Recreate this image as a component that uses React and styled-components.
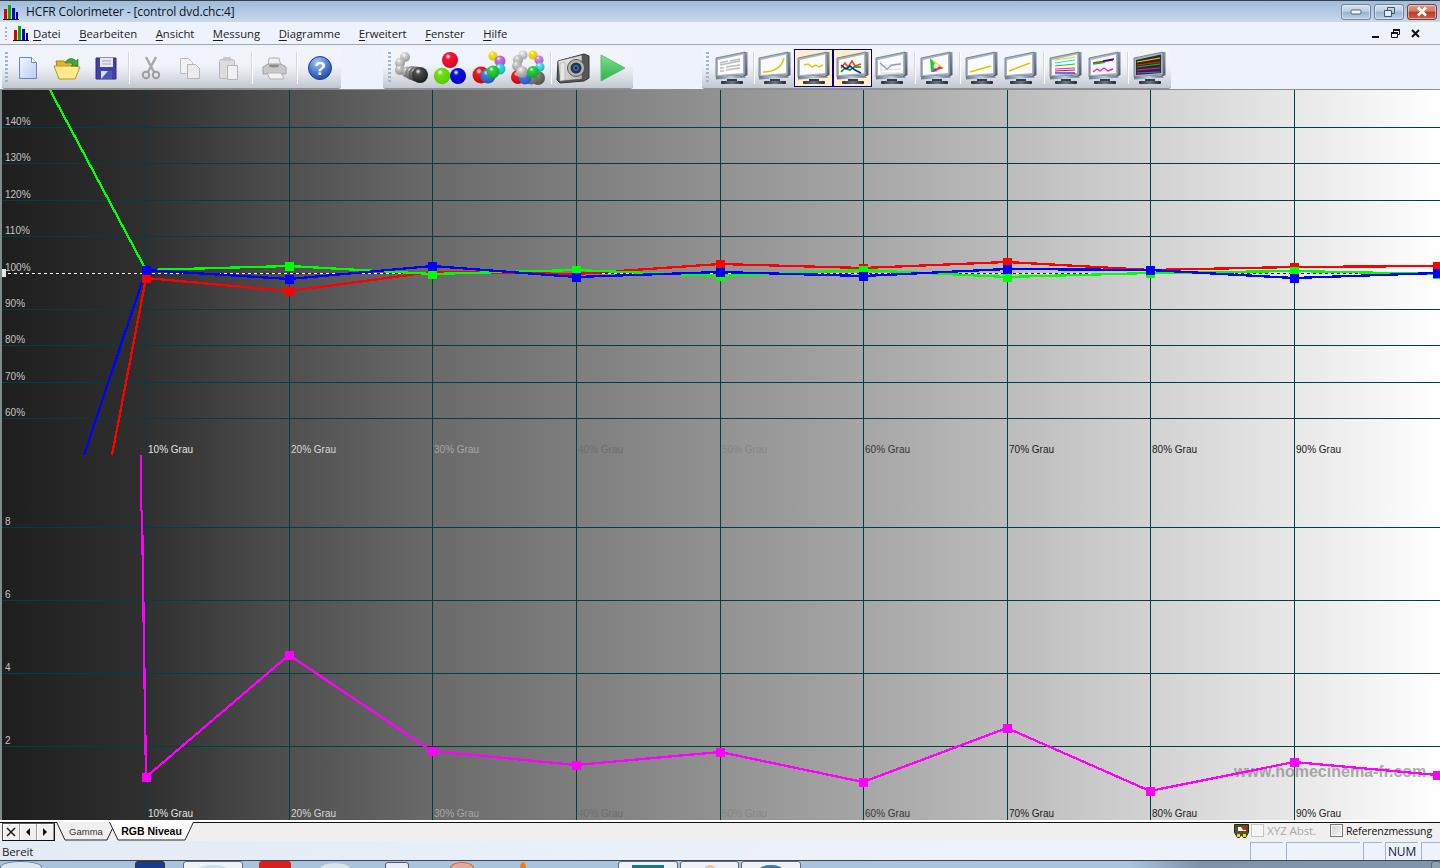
import React, { useId } from "react";
import styled, { createGlobalStyle } from "styled-components";

const uiFont = `"Open Sans", "Noto Sans", sans-serif`;
const chartFont = `"Liberation Sans", Arial, sans-serif`;
const gridColor = "#004040";

const GlobalStyle = createGlobalStyle`
  html, body { margin: 0; padding: 0; background: #eef3fb; overflow: hidden; }
  * { box-sizing: border-box; }
`;

const Window = styled.div`
  display: flex;
  flex-direction: column;
  width: 1440px;
  height: 868px;
  overflow: hidden;
  font-family: ${uiFont};
  color: #111;
`;

const TitleBar = styled.div`
  display: flex;
  align-items: center;
  flex: none;
  height: 22px;
  padding: 0 3px;
  border-top: 1px solid #3a3f46;
  background: linear-gradient(#9fbcdc, #c7d8eb);
`;
const TitleText = styled.div`
  flex: 1;
  margin-left: 7px;
  font-size: 12px;
  color: #10141c;
  letter-spacing: -0.13px;
`;
const WindowButtons = styled.div`
  display: flex;
  gap: 3px;
`;
const WindowButton = styled.div`
  display: flex;
  align-items: center;
  justify-content: center;
  width: 30px;
  height: 16px;
  border: 1px solid ${({ $close }) => ($close ? "#7c3a38" : "#6f8199")};
  border-radius: 3px;
  box-shadow: inset 0 0 0 1px rgba(255, 255, 255, 0.45);
  background: ${({ $close }) =>
    $close
      ? "linear-gradient(#dd9a88 0, #d07a66 45%, #b93a26 50%, #c9604c 100%)"
      : "linear-gradient(#d4e1ef 0, #bccee2 45%, #9ab4d0 50%, #b9cde2 100%)"};
`;

const MenuBar = styled.div`
  display: flex;
  align-items: center;
  flex: none;
  height: 23px;
  padding-left: 5px;
  background: #eef3fb;
  border-bottom: 1px solid #a3a6aa;
`;
const MenuGrip = styled.div`
  width: 2px;
  height: 13px;
  margin-right: 6px;
  background: repeating-linear-gradient(#9db0c8 0 2px, transparent 2px 4px);
`;
const MenuList = styled.div`
  display: flex;
  gap: 18.5px;
  flex: 1;
  margin-left: 4px;
`;
const MenuItem = styled.div`
  font-size: 11.3px;
  color: #1a1a1a;
  & u { text-underline-offset: 2px; }
`;
const ChildControls = styled.div`
  display: flex;
  gap: 9px;
  margin-right: 19px;
  align-items: center;
`;

const ToolStrip = styled.div`
  display: flex;
  flex: none;
  height: 45px;
  padding-top: 3px;
  background: #eef3fb;
  border-bottom: 1px solid #8a8d92;
`;
const ToolGroup = styled.div`
  display: flex;
  align-items: center;
  width: ${({ $width }) => $width}px;
  margin-left: ${({ $left }) => $left}px;
  padding-left: ${({ $pad }) => $pad}px;
  border-radius: 3px;
  border-bottom: 1px solid #8e9196;
  background: linear-gradient(#f2f5fb 0, #eff2f8 45%, #e2e5ec 65%, #c3c7cf 100%);
`;
const ToolGrip = styled.div`
  flex: none;
  width: 3px;
  height: 32px;
  margin-right: ${({ $right }) => $right || 0}px;
  background: repeating-linear-gradient(#9db4d4 0 2px, transparent 2px 4px);
`;
const ToolSlot = styled.div`
  display: flex;
  align-items: center;
  justify-content: center;
  flex: none;
  width: 39px;
  height: 38px;
  border: 1px solid ${({ $active }) => ($active ? "#000080" : "transparent")};
  background: ${({ $active }) => ($active ? "#ffeecb" : "transparent")};
`;
const ToolSep = styled.div`
  flex: none;
  width: ${({ $w }) => $w}px;
  height: 32px;
  display: flex;
  justify-content: center;
  &::before {
    content: "";
    width: 1px;
    background: #d2d6dd;
    box-shadow: 1px 0 #fff;
  }
`;

const ChartArea = styled.div`
  flex: none;
  height: 730px;
  border-left: 2px solid #7e8c8c;
  background: linear-gradient(
    90deg,
    #1e1e1e 0,
    #303030 146px,
    #505050 289px,
    #6a6a6a 432px,
    #7e7e7e 576px,
    #929292 720px,
    #a6a6a6 863px,
    #bcbcbc 1007px,
    #d2d2d2 1150px,
    #e8e8e8 1294px,
    #ffffff 1440px
  );
`;
const ChartSvg = styled.svg`
  display: block;
  width: 1440px;
  height: 365px;
  margin-left: -2px;
`;
const AxisText = styled.text`
  font-family: ${chartFont};
  font-size: 10px;
  fill: ${({ $fill }) => $fill};
`;
const Watermark = styled.text`
  font-family: ${chartFont};
  font-size: 16px;
  font-weight: 700;
  fill: #8f8f8f;
  opacity: 0.75;
`;

const TabRow = styled.div`
  display: flex;
  align-items: stretch;
  flex: none;
  height: 21px;
  border-top: 2px solid #fff;
  background: #f0f0f0;
  box-shadow: inset 0 1px #111;
  padding: 0 8px 0 2px;
`;
const TabNav = styled.div`
  display: flex;
  height: 18px;
  margin-top: 1px;
  border: 1px solid #555;
  border-right-color: #111;
  border-bottom-color: #111;
`;
const TabNavButton = styled.div`
  display: flex;
  align-items: center;
  justify-content: center;
  width: 17px;
  background: #f0f0f0;
  border-right: 1px solid #9a9a9a;
  box-shadow: inset 1px 1px #fff;
`;
const TabList = styled.div`
  display: flex;
  flex: 1;
  margin-left: 1px;
`;
const Tab = styled.div`
  position: relative;
  display: flex;
  align-items: center;
  justify-content: center;
  width: ${({ $w }) => $w}px;
  margin-left: ${({ $left }) => $left || 0}px;
  font-family: ${chartFont};
  font-size: ${({ $active }) => ($active ? 10.5 : 9.5)}px;
  font-weight: ${({ $active }) => ($active ? 700 : 400)};
  color: ${({ $active }) => ($active ? "#000" : "#333")};
  & svg { position: absolute; inset: 0; }
  & span { position: relative; margin-top: -1px; }
`;
const RefOptions = styled.div`
  display: flex;
  align-items: center;
  padding-bottom: 2px;
  letter-spacing: -0.1px;
`;
const CheckBox = styled.div`
  width: 13px;
  height: 13px;
  margin-right: 3px;
  border: 1px solid ${({ $off }) => ($off ? "#c4c4c4" : "#777")};
  background: ${({ $off }) => ($off ? "#f4f4f4" : "linear-gradient(135deg, #d2d2d2, #f4f4f4)")};
  box-shadow: inset 0 0 0 1px #f8f8f8;
`;
const CheckLabel = styled.span`
  color: ${({ $off }) => ($off ? "#a8a8a8" : "#111")};
  font-size: ${({ $off }) => ($off ? 11.5 : 10.5)}px;
  margin-right: ${({ $right }) => $right}px;
`;

const StatusBar = styled.div`
  display: flex;
  align-items: center;
  flex: none;
  height: 19px;
  padding-left: 2px;
  font-size: 11.5px;
  letter-spacing: -0.15px;
  background: linear-gradient(90deg, #e5ebf5 0, #e9eff8 500px, #eef3fb 1000px);
`;
const StatusText = styled.div`
  flex: 1;
  padding-top: 1px;
  color: #222;
`;
const StatusPane = styled.div`
  display: flex;
  align-items: center;
  justify-content: center;
  width: ${({ $w }) => $w}px;
  height: 18px;
  margin-top: 1px;
  margin-left: 3px;
  border-left: 1px solid #9db4d0;
  border-top: 1px solid #9db4d0;
  font-size: 12px;
  color: #14143c;
`;

const Taskbar = styled.div`
  display: flex;
  flex: 1;
  overflow: hidden;
  border-top: 1px solid #3e4650;
  background: linear-gradient(90deg, #a9c3dd 0, #a9c3dd 1130px, #7f92a9 1200px, #8095ac 1430px);
`;
const TaskItem = styled.div`
  display: flex;
  justify-content: center;
  flex: none;
  width: ${({ $w }) => $w}px;
  height: 12px;
  margin-top: ${({ $top }) => $top || 0}px;
  margin-left: ${({ $left }) => $left}px;
  border-radius: ${({ $round }) => ($round ? "50% 50% 0 0" : "3px 3px 0 0")};
  background: ${({ $bg }) => $bg};
  border: ${({ $line }) => ($line ? `1px solid ${$line}` : "none")};
`;
const TaskGlyph = styled.div`
  width: ${({ $w }) => $w}px;
  height: 10px;
  margin-top: 3px;
  border-radius: ${({ $round }) => ($round ? "50% 50% 0 0" : "0")};
  background: ${({ $bg }) => $bg};
`;

const AppIcon = () => (
  <svg width="16" height="16" viewBox="0 0 16 16">
    <rect x="1" y="5" width="3" height="10" fill="#e00000" />
    <rect x="5" y="1" width="3" height="14" fill="#00b000" />
    <rect x="9" y="4" width="3" height="11" fill="#0000e0" />
    <rect x="13" y="8" width="2" height="7" fill="#0000a0" />
    <rect x="0" y="15" width="16" height="1" fill="#111" />
  </svg>
);

const Ball = ({ x, y, r, c, mid }) => {
  const id = useId();
  return (
    <>
      <defs>
        <radialGradient id={id} cx="0.38" cy="0.28" r="0.8">
          <stop offset="0" stopColor="#ffffff" />
          <stop offset="0.22" stopColor={mid || c} />
          <stop offset="1" stopColor={c} />
        </radialGradient>
      </defs>
      <circle cx={x} cy={y} r={r} fill={`url(#${id})`} />
    </>
  );
};

const Icon = ({ children, w = 36, h = 36 }) => (
  <svg width={w} height={h} viewBox={`0 0 ${w} ${h}`}>
    {children}
  </svg>
);

const NewIcon = () => (
  <Icon w={24} h={26}>
    <defs>
      <linearGradient id="docFill" x1="0" y1="0" x2="1" y2="1">
        <stop offset="0" stopColor="#f2f6ff" />
        <stop offset="1" stopColor="#bccdf0" />
      </linearGradient>
    </defs>
    <path d="M3.5 2.5h12l5 5v16h-17z" fill="url(#docFill)" stroke="#6f86bd" />
    <path d="M15.5 2.5v5h5" fill="#fff" stroke="#6f86bd" />
  </Icon>
);
const OpenIcon = () => (
  <Icon w={28} h={26}>
    <path d="M3 6h8l2 2h9v15H6z" fill="#e2b52c" stroke="#a88318" />
    <path d="M1 11h20l6 1-5 12H6z" fill="#ffe98a" stroke="#b8962a" />
    <path d="M12 8c2-5 8-6 11-2l2-2v7h-7l2-2c-2-2-5-2-8-1z" fill="#3ea83e" stroke="#1d701d" strokeWidth="0.6" />
  </Icon>
);
const SaveIcon = () => (
  <Icon w={24} h={26}>
    <path d="M2 3h20v21H2z" fill="#4040a8" stroke="#2c2c80" />
    <rect x="6" y="3" width="13" height="9" fill="#e8e8f0" />
    <path d="M8 6h9M8 9h9" stroke="#a0a0b8" />
    <rect x="7" y="16" width="11" height="8" fill="#d8e0f0" />
    <path d="M7 24l7-8h4v8z" fill="#4a5ab0" />
  </Icon>
);
const CutIcon = () => (
  <Icon w={20} h={26}>
    <path d="M5 2l8 15M15 2L7 17" stroke="#a8a8a8" strokeWidth="2.4" />
    <circle cx="5" cy="20" r="3.2" fill="none" stroke="#9c9c9c" strokeWidth="2" />
    <circle cx="15" cy="20" r="3.2" fill="none" stroke="#9c9c9c" strokeWidth="2" />
  </Icon>
);
const CopyIcon = () => (
  <Icon w={24} h={26}>
    <path d="M2.5 3.5h8l4 4v11h-12z" fill="#f2f2f2" stroke="#bdbdbd" />
    <path d="M9.5 9.5h8l4 4v10h-12z" fill="#ececec" stroke="#b5b5b5" />
  </Icon>
);
const PasteIcon = () => (
  <Icon w={24} h={26}>
    <rect x="2.5" y="4.5" width="15" height="19" rx="2" fill="#dcdcdc" stroke="#b5b5b5" />
    <rect x="6" y="2" width="8" height="4" rx="1" fill="#c6c6c6" />
    <path d="M10.5 10.5h10v14h-10z" fill="#f0f0f0" stroke="#b5b5b5" />
  </Icon>
);
const PrintIcon = () => (
  <Icon w={26} h={26}>
    <path d="M8 3h10l2 8H7z" fill="#f0f0f0" stroke="#b2b2b2" />
    <path d="M2 12l5-3h13l5 3v7H2z" fill="#c8c8c8" stroke="#a2a2a2" />
    <path d="M6 18h14l3 6H9z" fill="#f2f2f2" stroke="#b2b2b2" />
    <ellipse cx="13" cy="11" rx="5" ry="1.4" fill="#8c8c8c" />
  </Icon>
);
const HelpIcon = () => (
  <Icon w={26} h={26}>
    <defs>
      <radialGradient id="helpFill" cx="0.4" cy="0.25" r="0.85">
        <stop offset="0" stopColor="#a8c8f4" />
        <stop offset="0.6" stopColor="#3f6fcc" />
        <stop offset="1" stopColor="#1a3f9c" />
      </radialGradient>
    </defs>
    <circle cx="13" cy="13" r="11.5" fill="url(#helpFill)" stroke="#24408c" />
    <text x="13" y="20" textAnchor="middle" fontFamily={chartFont} fontSize="19" fontWeight="700" fill="#fff">
      ?
    </text>
  </Icon>
);

const ChainIcon = () => (
  <Icon>
    <Ball x={12} y={7} r={5} c="#8e8e8e" mid="#d8d8d8" />
    <Ball x={7} y={13} r={5} c="#8e8e8e" mid="#d0d0d0" />
    <Ball x={7} y={20} r={5} c="#808080" mid="#c8c8c8" />
    <Ball x={14} y={22} r={5.5} c="#6a6a6a" mid="#bcbcbc" />
    <Ball x={19} y={23} r={7} c="#4a4a4a" mid="#9c9c9c" />
    <Ball x={23} y={24} r={7.5} c="#333" mid="#787878" />
    <Ball x={27} y={25} r={8} c="#161616" mid="#4c4c4c" />
  </Icon>
);
const RgbIcon = () => (
  <Icon>
    <Ball x={18} y={10} r={8} c="#d80020" mid="#f01838" />
    <Ball x={10} y={26} r={8.2} c="#50c800" mid="#70e010" />
    <Ball x={26} y={26} r={8} c="#0000c0" mid="#1010e0" />
  </Icon>
);
const ColorChainIcon = () => (
  <Icon>
    <Ball x={22} y={6} r={4.6} c="#d8c000" mid="#f4e020" />
    <Ball x={29} y={11} r={5.5} c="#a040c0" mid="#c878d8" />
    <Ball x={29} y={19} r={5.5} c="#10b0c0" mid="#40d8e0" />
    <Ball x={10} y={25} r={8.5} c="#c00000" mid="#e82020" />
    <Ball x={17} y={26} r={7.5} c="#2050c0" mid="#4080e0" />
    <Ball x={22} y={22} r={6.5} c="#10a020" mid="#30d040" />
  </Icon>
);
const AllColorsIcon = () => (
  <Icon>
    <Ball x={13} y={5} r={4.6} c="#a0a0a0" mid="#e0e0e0" />
    <Ball x={23} y={5} r={4.6} c="#d8c000" mid="#f4e020" />
    <Ball x={29} y={10} r={4.6} c="#b050c8" mid="#d088e0" />
    <Ball x={30} y={17} r={4.6} c="#10b0c0" mid="#50e0e8" />
    <Ball x={8} y={10} r={5} c="#909090" mid="#cccccc" />
    <Ball x={7} y={16} r={5} c="#909090" mid="#c8c8c8" />
    <Ball x={8} y={27} r={7} c="#c00000" mid="#e82020" />
    <Ball x={28} y={28} r={7} c="#484848" mid="#808080" />
    <Ball x={21} y={28} r={6.5} c="#606060" mid="#909090" />
    <Ball x={15} y={28} r={6.5} c="#2050c0" mid="#4080e0" />
    <Ball x={12} y={22} r={6} c="#888" mid="#d0d0d0" />
    <Ball x={23} y={22} r={6} c="#10a020" mid="#30d040" />
  </Icon>
);
const CameraIcon = () => (
  <Icon>
    <defs>
      <linearGradient id="camBody" x1="0" y1="0" x2="1" y2="1">
        <stop offset="0" stopColor="#f6f6f0" />
        <stop offset="1" stopColor="#b4b4b0" />
      </linearGradient>
    </defs>
    <path d="M3 11l26-7 5 2v22l-5 3-24 2-3-3z" fill="#55565a" stroke="#333" />
    <path d="M3 11l24-6v24l-22 2z" fill="url(#camBody)" stroke="#555" strokeWidth="0.6" />
    <path d="M5 13l5-1v18l-5 1z" fill="#e6e6de" stroke="#999" strokeWidth="0.5" />
    <circle cx="21" cy="18" r="8.5" fill="#b4b4b4" stroke="#555" />
    <circle cx="21" cy="18" r="5.5" fill="#333" />
    <circle cx="21" cy="18" r="3" fill="#2a66c8" />
    <circle cx="21" cy="18" r="1.2" fill="#10204a" />
  </Icon>
);
const PlayIcon = () => (
  <Icon w={28} h={30}>
    <defs>
      <linearGradient id="playFill" x1="0" y1="0" x2="0" y2="1">
        <stop offset="0" stopColor="#7ee08a" />
        <stop offset="1" stopColor="#2fb04c" />
      </linearGradient>
    </defs>
    <path d="M3 2l24 13L3 28z" fill="url(#playFill)" stroke="#58c070" />
  </Icon>
);

const Monitor = ({ children, dark }) => (
  <svg width="34" height="34" viewBox="0 0 34 34">
    <defs>
      <linearGradient id="monSide" x1="0" y1="0" x2="0" y2="1">
        <stop offset="0" stopColor="#8c97a8" />
        <stop offset="1" stopColor="#4c5868" />
      </linearGradient>
      <linearGradient id="monFoot" x1="0" y1="0" x2="1" y2="0">
        <stop offset="0" stopColor="#2c2f36" />
        <stop offset="0.5" stopColor="#6d7888" />
        <stop offset="1" stopColor="#22252a" />
      </linearGradient>
      <linearGradient id="monChin" x1="0" y1="0" x2="1" y2="0">
        <stop offset="0" stopColor="#67778d" />
        <stop offset="0.5" stopColor="#b9cbe0" />
        <stop offset="1" stopColor="#5a6a80" />
      </linearGradient>
    </defs>
    <path d="M29 1h3.5v23l-4 2z" fill="url(#monSide)" />
    <path d="M1 7L30 1v23L1 26z" fill="#aab3c0" stroke="#6b7484" strokeWidth="0.8" />
    <path d="M3 9l25-5.5V22L3 24z" fill={dark ? "#2a2a2a" : "#fbfbfb"} />
    <path d="M1 25h28l2 1.5L1 28.5z" fill="url(#monChin)" />
    <rect x="12" y="28" width="10" height="2" fill="#3a3f48" />
    <rect x="6" y="30" width="22" height="3" rx="1" fill="url(#monFoot)" />
    {children}
  </svg>
);

const monitors = [
  <path d="M5 12l8-2 M15 10l10-2 M5 14l20-4 M5 17h4M11 16l14-2M5 20h4M11 19l14-2" stroke="#bcbcbc" strokeWidth="1.4" />,
  <path d="M5 21c8 0 18-2 21-14" fill="none" stroke="#d8c800" strokeWidth="1.4" />,
  <path d="M7 14l4-1 4 3 4-2 3 2 4-2" fill="none" stroke="#d8c800" strokeWidth="1.4" />,
  <>
    <path d="M5 17l4-5 3 4 4-6 3 5 6-2" fill="none" stroke="#e05010" strokeWidth="1.6" />
    <path d="M5 21l4-4 5 2 4-3 7 0" fill="none" stroke="#108c10" strokeWidth="1.6" />
    <path d="M5 14l5 4 4-3 5 4 6 3" fill="none" stroke="#0030a0" strokeWidth="1.6" />
  </>,
  <>
    <path d="M6 10v12M6 22h20M6 19l20-1M6 15l20-2" stroke="#d0d8d0" strokeWidth="0.8" />
    <path d="M5 12l7 6 5-4 9-1" fill="none" stroke="#9d92d8" strokeWidth="1.4" />
  </>,
  <>
    <path d="M10 7l7 8-6 6z" fill="#18c830" />
    <path d="M10 7l14 10-7-2z" fill="#d8d020" />
    <path d="M24 17l-13 4 6-6z" fill="#e82838" />
    <path d="M11 21l3-2 5 1z" fill="#3848e0" />
    <circle cx="16" cy="15" r="2.5" fill="#fff" opacity="0.8" />
  </>,
  <path d="M5 21l21-6" fill="none" stroke="#d8c800" strokeWidth="1.4" />,
  <path d="M5 20l21-8" fill="none" stroke="#d8c800" strokeWidth="1.4" />,
  <>
    <path d="M6 9l20-3" stroke="#e8d800" strokeWidth="1.2" />
    <path d="M6 12l20-3" stroke="#20e0e0" strokeWidth="1.2" />
    <path d="M6 15l20-2" stroke="#10d010" strokeWidth="1.2" />
    <path d="M6 18l20-1" stroke="#f020e0" strokeWidth="1.2" />
    <path d="M6 20l20-1" stroke="#e01010" strokeWidth="1.2" />
    <path d="M6 22h20" stroke="#1010e0" strokeWidth="1.2" />
  </>,
  <>
    <path d="M5 12l20-3" stroke="#e01010" strokeWidth="1.6" />
    <path d="M5 13l8-1 4-1" stroke="#10c010" strokeWidth="1.4" />
    <path d="M15 10l11-2" stroke="#1010e0" strokeWidth="1.4" />
    <path d="M5 21l4-3 3 2 4-3 4 3 5-2" fill="none" stroke="#f010f0" strokeWidth="1.4" />
  </>,
  <>
    <path d="M4 11l23-4" stroke="#e8d800" strokeWidth="1.1" />
    <path d="M4 14l23-3" stroke="#e02010" strokeWidth="1.1" />
    <path d="M4 16l23-3" stroke="#10c010" strokeWidth="1.1" />
    <path d="M4 19l23-2" stroke="#f010f0" strokeWidth="1.1" />
    <path d="M4 22l23-1" stroke="#6060e0" strokeWidth="1.1" />
  </>
];

const menuItems = [
  ["D", "atei"],
  ["B", "earbeiten"],
  ["A", "nsicht"],
  ["M", "essung"],
  ["D", "iagramme"],
  ["E", "rweitert"],
  ["F", "enster"],
  ["H", "ilfe"]
];

const gridX = [146, 289, 432, 576, 720, 863, 1007, 1150, 1294];
const measureX = [...gridX, 1437];

const labelColors = ["#e2e2e2", "#d6d6d6", "#a6a6a6", "#6e6e6e", "#868686", "#383838", "#222", "#222", "#222"];

const redLine = [278, 291, 272, 274, 264, 268, 262, 270, 267, 266];
const greenLine = [270, 266, 274, 270, 276, 270, 277, 273, 271, 274];
const blueLine = [270, 279, 266, 277, 272, 276, 269, 270, 278, 273];
const pinkLine = [777, 655, 751, 765, 752, 782, 728, 791, 762, 775];

const toPoints = (ys, lead = []) =>
  [...lead, ...ys.map((y, i) => [measureX[i], y])].map((p) => p.join(",")).join(" ");

const Series = ({ ys, lead, color }) => (
  <polyline points={toPoints(ys, lead)} fill="none" stroke={color} strokeWidth="2.3" shapeRendering="crispEdges" />
);
const Markers = ({ ys, color }) =>
  ys.map((y, i) => <rect key={i} x={measureX[i] - 4} y={y - 4} width="9" height="9" fill={color} />);

const Grid = ({ rows, top, bottom }) => (
  <g stroke={gridColor} strokeWidth="1" shapeRendering="crispEdges">
    {rows.map((y) => (
      <line key={y} x1="2" x2="1440" y1={y + 0.5} y2={y + 0.5} />
    ))}
    {gridX.map((x) => (
      <line key={x} x1={x + 0.5} x2={x + 0.5} y1={top} y2={bottom} />
    ))}
  </g>
);

const GrayLabels = ({ y }) =>
  gridX.map((x, i) => (
    <AxisText key={x} x={x + 2} y={y} $fill={labelColors[i]}>
      {(i + 1) * 10}% Grau
    </AxisText>
  ));

const topRows = [127, 163, 200, 236, 309, 345, 382, 418];
const topLabels = [
  [140, 125],
  [130, 161],
  [120, 198],
  [110, 234],
  [100, 271],
  [90, 307],
  [80, 343],
  [70, 380],
  [60, 416]
];

const LevelChart = () => (
  <ChartSvg viewBox="0 90 1440 365">
    <Grid rows={topRows} top={90} bottom={455} />
    {topLabels.map(([v, y]) => (
      <AxisText key={v} x="5" y={y} $fill="#c4c4c4">
        {v}%
      </AxisText>
    ))}
    <GrayLabels y={453} />
    <line x1="2" x2="1437" y1="273.5" y2="273.5" stroke="#222" shapeRendering="crispEdges" />
    <line x1="2" x2="1437" y1="273.5" y2="273.5" stroke="#fff" strokeDasharray="3 3" shapeRendering="crispEdges" />
    <rect x="2" y="269" width="4" height="8" fill="#e8e8e8" />
    <Series ys={redLine} lead={[[112, 455]]} color="#ff0000" />
    <Series ys={greenLine} lead={[[50, 90]]} color="#00ff00" />
    <Series ys={blueLine} lead={[[84, 455]]} color="#0000ff" />
    <Markers ys={redLine} color="#ff0000" />
    <Markers ys={greenLine} color="#00ff00" />
    <Markers ys={blueLine} color="#0000ff" />
  </ChartSvg>
);

const deltaLabels = [
  [8, 525],
  [6, 598],
  [4, 671],
  [2, 744]
];

const DeltaChart = () => (
  <ChartSvg viewBox="0 455 1440 365">
    <Grid rows={[527, 600, 673, 746]} top={455} bottom={820} />
    {deltaLabels.map(([v, y]) => (
      <AxisText key={v} x="5" y={y} $fill="#c4c4c4">
        {v}
      </AxisText>
    ))}
    <GrayLabels y={817} />
    <Watermark x="1234" y="777">
      www.homecinema-fr.com
    </Watermark>
    <Series
      ys={pinkLine}
      lead={[
        [141, 455],
        [141, 510],
        [142, 511]
      ]}
      color="#ff00ff"
    />
    <Markers ys={pinkLine} color="#ff00ff" />
  </ChartSvg>
);

const TabShape = ({ w, fill }) => (
  <svg width={w} height="19" viewBox={`0 0 ${w} 19`}>
    <path d={`M0.5 0L9 18H${w - 9}L${w - 0.5} 0`} fill={fill} stroke="#222" />
    <path d={`M9 18H${w - 9}`} stroke="#8a8a8a" />
  </svg>
);

const whiteButton = { $bg: "#eef2f6", $line: "#667" };
const taskItems = [
  { $w: 42, $left: 0, $round: true, $bg: "#dbe7f2", $line: "#5f7f9f" },
  { $w: 30, $left: 93, $bg: "#1c3a8c", $line: "#333" },
  { ...whiteButton, $w: 60, $left: 18, glyph: { $w: 30, $round: true, $bg: "#cfdce8" } },
  { $w: 32, $left: 16, $bg: "#d82020" },
  { $w: 30, $left: 29, $top: 2, $round: true, $bg: "#d8e4ee" },
  { $w: 24, $left: 35, $top: 1, $bg: "#e8ecf8", $line: "#556" },
  { $w: 24, $left: 41, $top: 1, $round: true, $bg: "#e8a898", $line: "#c86050" },
  { $w: 6, $left: 46, $top: 1, $round: true, $bg: "#e88010" },
  { ...whiteButton, $w: 60, $left: 92, glyph: { $w: 32, $bg: "#0a8080" } },
  { ...whiteButton, $w: 59, $left: 2, glyph: { $w: 12, $round: true, $bg: "#e8c8a0" } },
  { ...whiteButton, $w: 60, $left: 2, glyph: { $w: 24, $round: true, $bg: "#3a7ab0" } },
  { $w: 10, $left: 630, $bg: "#8ea0b4", $line: "#5a6a7a" }
];

export default function App() {
  return (
    <Window>
      <GlobalStyle />
      <TitleBar>
        <AppIcon />
        <TitleText>HCFR Colorimeter - [control dvd.chc:4]</TitleText>
        <WindowButtons>
          <WindowButton>
            <svg width="12" height="6" viewBox="0 0 12 6">
              <rect x="1" y="1" width="10" height="4" rx="1" fill="#f4f6f8" stroke="#56657a" />
            </svg>
          </WindowButton>
          <WindowButton>
            <svg width="13" height="12" viewBox="0 0 13 12">
              <path d="M4.5 1.5h7v6h-7z" fill="none" stroke="#46566a" />
              <path d="M1.5 4.5h7v6h-7z" fill="#dfe7ef" stroke="#46566a" />
            </svg>
          </WindowButton>
          <WindowButton $close>
            <svg width="12" height="11" viewBox="0 0 12 11">
              <path d="M2 1.5l8 8M10 1.5l-8 8" stroke="#fff" strokeWidth="2.6" />
            </svg>
          </WindowButton>
        </WindowButtons>
      </TitleBar>

      <MenuBar>
        <MenuGrip />
        <AppIcon />
        <MenuList>
          {menuItems.map(([first, rest]) => (
            <MenuItem key={first + rest}>
              <u>{first}</u>
              {rest}
            </MenuItem>
          ))}
        </MenuList>
        <ChildControls>
          <svg width="11" height="11" viewBox="0 0 11 11">
            <rect x="2" y="8" width="7" height="2" fill="#111" />
          </svg>
          <svg width="11" height="11" viewBox="0 0 11 11">
            <path d="M3.5 1.5h6v5h-6z" fill="none" stroke="#111" />
            <path d="M3 1h7v2H3z" fill="#111" />
            <path d="M1.5 4.5h6v5h-6z" fill="#eef3fb" stroke="#111" />
            <path d="M1 4h7v2H1z" fill="#111" />
          </svg>
          <svg width="11" height="11" viewBox="0 0 11 11">
            <path d="M2 2l7 7M9 2l-7 7" stroke="#111" strokeWidth="2" />
          </svg>
        </ChildControls>
      </MenuBar>

      <ToolStrip>
        <ToolGroup $width={339} $left={2} $pad={3}>
          <ToolGrip />
          <ToolSlot>
            <NewIcon />
          </ToolSlot>
          <ToolSlot>
            <OpenIcon />
          </ToolSlot>
          <ToolSlot>
            <SaveIcon />
          </ToolSlot>
          <ToolSep $w={6} />
          <ToolSlot>
            <CutIcon />
          </ToolSlot>
          <ToolSlot>
            <CopyIcon />
          </ToolSlot>
          <ToolSlot>
            <PasteIcon />
          </ToolSlot>
          <ToolSep $w={6} />
          <ToolSlot>
            <PrintIcon />
          </ToolSlot>
          <ToolSep $w={7} />
          <ToolSlot>
            <HelpIcon />
          </ToolSlot>
        </ToolGroup>

        <ToolGroup $width={250} $left={42} $pad={5}>
          <ToolGrip />
          <ToolSlot>
            <ChainIcon />
          </ToolSlot>
          <ToolSlot>
            <RgbIcon />
          </ToolSlot>
          <ToolSlot>
            <ColorChainIcon />
          </ToolSlot>
          <ToolSlot>
            <AllColorsIcon />
          </ToolSlot>
          <ToolSep $w={6} />
          <ToolSlot>
            <CameraIcon />
          </ToolSlot>
          <ToolSlot>
            <PlayIcon />
          </ToolSlot>
        </ToolGroup>

        <ToolGroup $width={469} $left={69} $pad={4}>
          <ToolGrip $right={3} />
          <ToolSlot>
            <Monitor>{monitors[0]}</Monitor>
          </ToolSlot>
          <ToolSep $w={4} />
          <ToolSlot>
            <Monitor>{monitors[1]}</Monitor>
          </ToolSlot>
          <ToolSlot $active>
            <Monitor>{monitors[2]}</Monitor>
          </ToolSlot>
          <ToolSlot $active>
            <Monitor>{monitors[3]}</Monitor>
          </ToolSlot>
          <ToolSlot>
            <Monitor>{monitors[4]}</Monitor>
          </ToolSlot>
          <ToolSep $w={6} />
          <ToolSlot>
            <Monitor>{monitors[5]}</Monitor>
          </ToolSlot>
          <ToolSep $w={6} />
          <ToolSlot>
            <Monitor>{monitors[6]}</Monitor>
          </ToolSlot>
          <ToolSlot>
            <Monitor>{monitors[7]}</Monitor>
          </ToolSlot>
          <ToolSep $w={6} />
          <ToolSlot>
            <Monitor>{monitors[8]}</Monitor>
          </ToolSlot>
          <ToolSlot>
            <Monitor>{monitors[9]}</Monitor>
          </ToolSlot>
          <ToolSep $w={6} />
          <ToolSlot>
            <Monitor dark>{monitors[10]}</Monitor>
          </ToolSlot>
        </ToolGroup>
      </ToolStrip>

      <ChartArea>
        <LevelChart />
        <DeltaChart />
      </ChartArea>

      <TabRow>
        <TabNav>
          <TabNavButton>
            <svg width="10" height="10" viewBox="0 0 10 10">
              <path d="M1 1l8 8M9 1L1 9" stroke="#111" strokeWidth="1.4" />
            </svg>
          </TabNavButton>
          <TabNavButton>
            <svg width="6" height="8" viewBox="0 0 6 8">
              <path d="M5 0v8L1 4z" fill="#111" />
            </svg>
          </TabNavButton>
          <TabNavButton>
            <svg width="6" height="8" viewBox="0 0 6 8">
              <path d="M1 0v8l4-4z" fill="#111" />
            </svg>
          </TabNavButton>
        </TabNav>
        <TabList>
          <Tab $w={60}>
            <TabShape w={60} fill="#f0f0f0" />
            <span>Gamma</span>
          </Tab>
          <Tab $w={85} $left={-7} $active>
            <TabShape w={85} fill="#ffffff" />
            <span>RGB Niveau</span>
          </Tab>
        </TabList>
        <RefOptions>
          <svg width="15" height="14" viewBox="0 0 15 14" style={{ marginRight: 2 }}>
            <path d="M0.5 0.5h14v8l-3 5h-2l-2-3-2 3h-2l-3-5z" fill="#55551a" stroke="#222" />
            <path d="M4 3h8v4H4z" fill="#f4f4f4" />
            <path d="M7 3h5v3H9z" fill="#e02020" />
            <path d="M3 10h3v3H3zM9 10h3v3H9z" fill="#e8e020" />
          </svg>
          <CheckBox $off />
          <CheckLabel $off $right={14}>
            XYZ Abst.
          </CheckLabel>
          <CheckBox />
          <CheckLabel $right={0}>Referenzmessung</CheckLabel>
        </RefOptions>
      </TabRow>

      <StatusBar>
        <StatusText>Bereit</StatusText>
        <StatusPane $w={33} />
        <StatusPane $w={74} />
        <StatusPane $w={19} />
        <StatusPane $w={33}>NUM</StatusPane>
        <StatusPane $w={19} />
      </StatusBar>

      <Taskbar>
        {taskItems.map(({ glyph, ...item }, i) => (
          <TaskItem key={i} {...item}>
            {glyph && <TaskGlyph {...glyph} />}
          </TaskItem>
        ))}
      </Taskbar>
    </Window>
  );
}
